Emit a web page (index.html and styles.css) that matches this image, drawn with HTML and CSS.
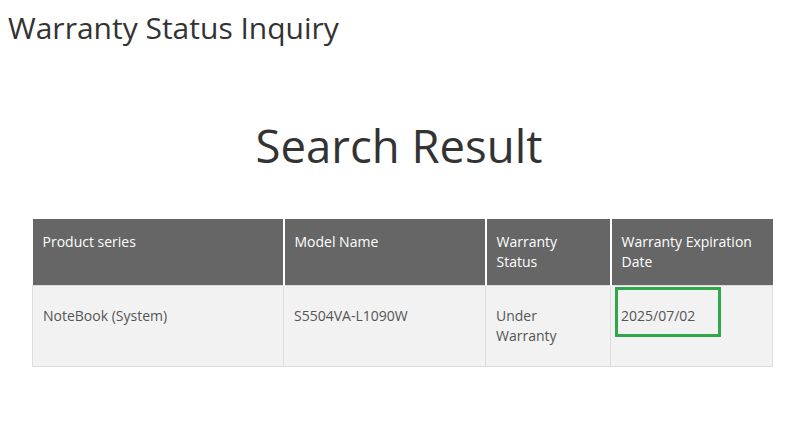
FILE: index.html
```html
<!DOCTYPE html>
<html>
<head>
<meta charset="utf-8">
<link rel="stylesheet" href="styles.css">
</head>
<body>
<h1 class="page-title">Warranty Status Inquiry</h1>
<h2 class="result-title">Search Result</h2>
<table class="result-table">
  <colgroup>
    <col class="c1">
    <col class="c2">
    <col class="c3">
    <col class="c4">
  </colgroup>
  <thead>
    <tr>
      <th>Product series</th>
      <th>Model Name</th>
      <th>Warranty Status</th>
      <th>Warranty Expiration Date</th>
    </tr>
  </thead>
  <tbody>
    <tr>
      <td>NoteBook (System)</td>
      <td>S5504VA-L1090W</td>
      <td>Under Warranty</td>
      <td class="date-cell"><span class="highlight"></span>2025/07/02</td>
    </tr>
  </tbody>
</table>
</body>
</html>
```
FILE: styles.css
```css
html, body {
  margin: 0;
  padding: 0;
  background: #fff;
}
body {
  font-family: "Open Sans", "Noto Sans", sans-serif;
  color: #333;
}
.page-title {
  margin: 0;
  padding: 8px 0 0 8px;
  font-size: 30px;
  font-weight: 400;
  line-height: 40px;
  color: #333;
}
.result-title {
  margin: 69px 0 0 0;
  padding-left: 9px;
  text-align: center;
  font-size: 45.5px;
  font-weight: 400;
  line-height: 56px;
  color: #333;
}
.result-table {
  margin: 46px 0 0 32px;
  width: 740px;
  border-collapse: collapse;
  table-layout: fixed;
  font-size: 14px;
  line-height: 20px;
}
.c1 { width: 251px; }
.c2 { width: 202px; }
.c3 { width: 125px; }
.c4 { width: 162px; }
.result-table th {
  background: #666;
  color: #fff;
  font-weight: 400;
  text-align: left;
  vertical-align: top;
  padding: 13px 10px 13px 10px;
  height: 40px;
  border-left: 2px solid #fff;
  border-right: 2px solid #fff;
}
.result-table th:first-child { border-left: none; }
.result-table th:last-child { border-right: none; }
.result-table td {
  background: #f2f2f2;
  color: #555;
  vertical-align: top;
  padding: 20px 10px 20px 10px;
  height: 40px;
  border: 1px solid #ddd;
}
.date-cell {
  position: relative;
}
.highlight {
  position: absolute;
  left: 4px;
  top: 1px;
  width: 100px;
  height: 44px;
  border: 3px solid #2ea84a;
}
```
